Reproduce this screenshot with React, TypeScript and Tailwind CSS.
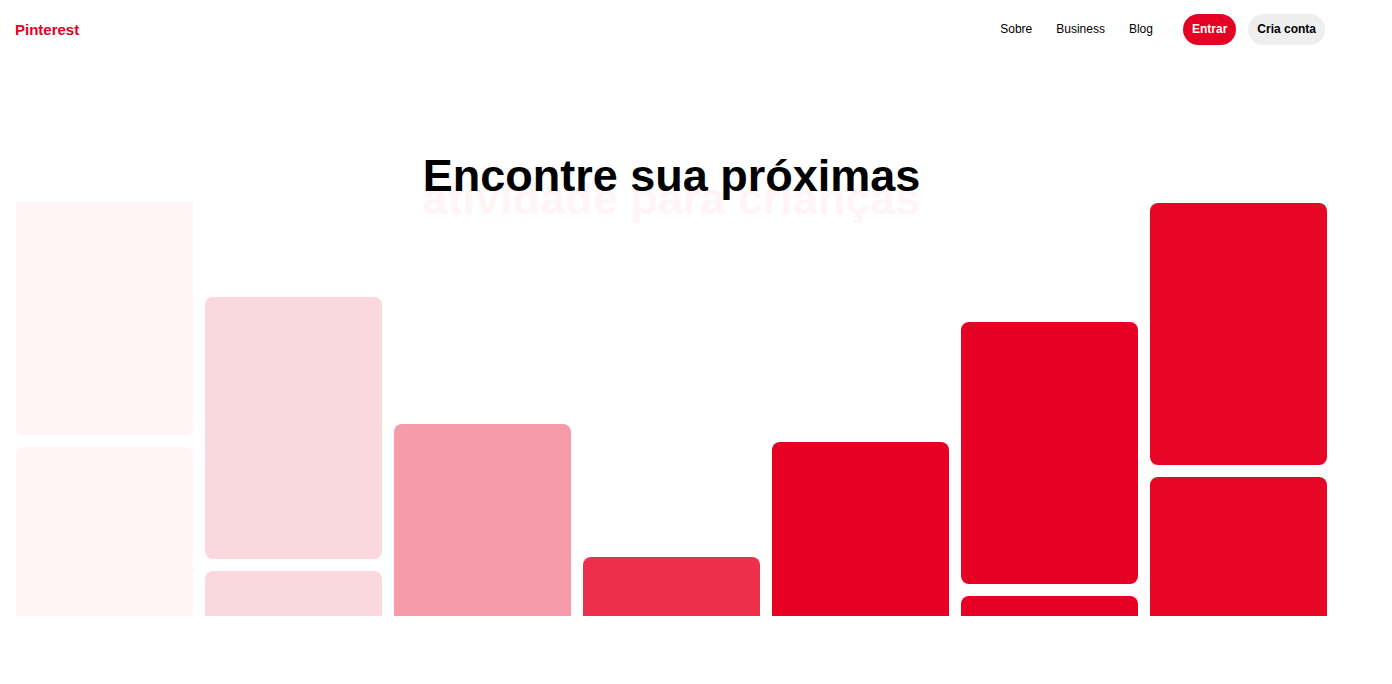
const links = [
  { label: "Sobre", href: "#sobre" },
  { label: "Business", href: "#business" },
  { label: "Blog", href: "#blog" },
];

const columns = [
  { offset: "", color: "bg-[#fff5f6]", first: "h-[233px] rounded-b-lg" },
  { offset: "pt-[95px]", color: "bg-[#fad8dd]", first: "h-[262px] rounded-lg" },
  { offset: "pt-[222px]", color: "bg-[#f59ba9]", first: "h-[262px] rounded-lg" },
  { offset: "pt-[355px]", color: "bg-[#ed2f4c]", first: "h-[262px] rounded-lg" },
  { offset: "pt-[240px]", color: "bg-[#e60023]", first: "h-[262px] rounded-lg" },
  { offset: "pt-[120px]", color: "bg-[#e60023]", first: "h-[262px] rounded-lg" },
  { offset: "pt-px", color: "bg-[#e80627]", first: "h-[262px] rounded-lg" },
];

function Header() {
  return (
    <header className="flex h-[59px] items-center justify-between pr-[67px] pl-[15px]">
      <a href="#inicio" className="pt-0.5 text-[15px] font-bold text-[#e60023]">
        Pinterest
      </a>
      <div className="flex items-center">
        <nav className="mr-[30px] flex gap-6 pb-0.5 text-xs">
          {links.map((link) => (
            <a key={link.label} href={link.href}>
              {link.label}
            </a>
          ))}
        </nav>
        <div className="flex gap-3 text-xs font-bold">
          <button type="button" className="h-[31px] rounded-full bg-[#e60023] px-[9px] pb-0.5 text-white">
            Entrar
          </button>
          <button type="button" className="h-[31px] rounded-full bg-[#eeeeee] px-[9px] pb-0.5 text-black">
            Cria conta
          </button>
        </div>
      </div>
    </header>
  );
}

function Board() {
  return (
    <div className="-mt-2 grid h-[414px] grid-cols-7 gap-3 overflow-hidden">
      {columns.map((column, index) => (
        <div key={index} className={`flex flex-col gap-3 ${column.offset}`}>
          <div className={`shrink-0 ${column.first} ${column.color}`} />
          <div className={`h-[262px] shrink-0 rounded-lg ${column.color}`} />
        </div>
      ))}
    </div>
  );
}

export default function App() {
  return (
    <div className="min-h-screen bg-white font-['Liberation_Sans',Arial,sans-serif] text-black">
      <Header />
      <main className="pt-[105px] pr-[65px] pl-4">
        <h1 className="text-center text-[45px] leading-[23px] font-bold">
          <span className="relative z-10 block">Encontre sua próximas</span>
          <span className="block text-[#fff5f6]">atividade para crianças</span>
        </h1>
        <Board />
      </main>
    </div>
  );
}
